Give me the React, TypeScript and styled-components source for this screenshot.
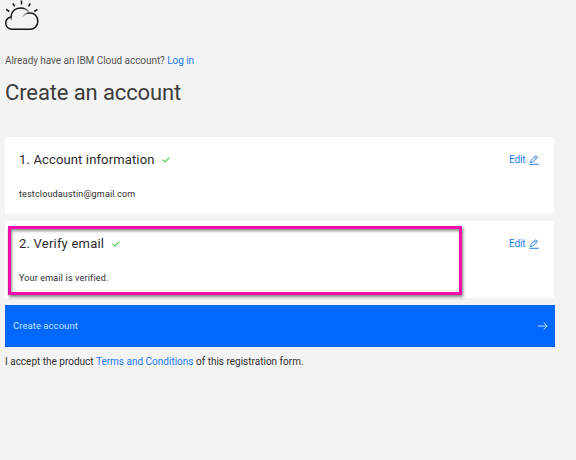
import React from "react";
import styled, { createGlobalStyle } from "styled-components";

const Global = createGlobalStyle`
  * { box-sizing: border-box; }
  body { margin: 0; background: #f3f3f3; font-family: Roboto, "Open Sans", sans-serif; color: #2b2b2b; }
`;
const Page = styled.main`
  width: 576px;
  height: 460px;
  padding: 0 21px 0 5px;
  display: flex;
  flex-direction: column;
  overflow: hidden;
  background: #f3f3f3;
`;
const Logo = styled.svg`
  display: block;
  width: 36px;
  height: 32px;
  flex: none;
`;
const Line = styled.p<{ $top: number; $color: string; $spacing: number }>`
  margin: ${(p) => p.$top}px 0 0;
  font-size: 10px;
  line-height: 14px;
  white-space: nowrap;
  color: ${(p) => p.$color};
  letter-spacing: ${(p) => p.$spacing}px;
`;
const Link = styled.a`
  color: #1a7af8;
  text-decoration: none;
`;
const Heading = styled.h1`
  margin: 8px 0 0;
  font-size: 22px;
  font-weight: 400;
  line-height: 33px;
  letter-spacing: -0.12px;
  color: #3c3c3c;
`;
const Cards = styled.div`
  display: flex;
  flex-direction: column;
  gap: 7px;
  margin-top: 28px;
`;
const Card = styled.section`
  position: relative;
  height: 77px;
  margin-right: 1px;
  padding: 14px 15px 0 14px;
  background: #fff;
`;
const CardHeader = styled.div`
  display: flex;
  align-items: center;
  height: 18px;
`;
const Title = styled.h2<{ $spacing: number }>`
  margin: 0;
  font-size: 13px;
  font-weight: 400;
  line-height: 18px;
  letter-spacing: ${(p) => p.$spacing}px;
`;
const Check = styled.svg`
  width: 8px;
  height: 6px;
  margin-left: 7.5px;
`;
const Edit = styled.a`
  display: flex;
  align-items: center;
  gap: 3.5px;
  margin-left: auto;
  font-size: 10px;
  line-height: 14px;
  letter-spacing: -0.1px;
  color: #1a7af8;
`;
const Detail = styled.p<{ $spacing: number }>`
  margin: 18px 0 0;
  font-size: 9px;
  line-height: 14px;
  letter-spacing: ${(p) => p.$spacing}px;
`;
const Highlight = styled.div`
  position: absolute;
  left: 3px;
  top: 5px;
  width: 454px;
  height: 69px;
  border: 3px solid #f00ca8;
  box-shadow: 1px 2px 3px rgba(0, 0, 0, 0.5), inset 1px 2px 3px rgba(0, 0, 0, 0.45);
`;
const Submit = styled.button`
  display: flex;
  align-items: center;
  justify-content: space-between;
  height: 42px;
  margin: 7px 0 0;
  padding: 0 7px 0 8px;
  border: 0;
  background: #0068ff;
  color: #c5e0ff;
  font: 9.5px/14px Roboto, sans-serif;
  letter-spacing: 0.05px;
`;

const EditLink = () => (
  <Edit>
    Edit
    <svg width="10" height="10" viewBox="0 0 10 10" fill="none" stroke="currentColor" strokeWidth="0.95">
      <path d="M.3 9.3h9.4M1.5 7.6l.5-2.2L6.7.7l1.7 1.7-4.7 4.7zM5.5 1.9l1.7 1.7" />
    </svg>
  </Edit>
);
const CheckIcon = () => (
  <Check viewBox="0 0 8 6" fill="none" stroke="#42cd50" strokeWidth="1.05">
    <path d="M.6 2.6 3 5 7.5.6" />
  </Check>
);

export default function App() {
  return (
    <>
      <Global />
      <Page>
        <Logo viewBox="0 0 36 32" fill="none" stroke="#151515" strokeWidth="1.5">
          <defs>
            <linearGradient id="puff" gradientUnits="userSpaceOnUse" x1="17" y1="16" x2="25" y2="13">
              <stop offset="0" stopColor="#151515" stopOpacity="0.05" />
              <stop offset="1" stopColor="#151515" />
            </linearGradient>
            <linearGradient id="tail" gradientUnits="userSpaceOnUse" x1="6" y1="16.5" x2="7" y2="21">
              <stop offset="0" stopColor="#151515" />
              <stop offset="1" stopColor="#151515" stopOpacity="0" />
            </linearGradient>
            <linearGradient id="dome" gradientUnits="userSpaceOnUse" x1="18" y1="8" x2="25" y2="12.5">
              <stop offset="0" stopColor="#151515" />
              <stop offset="1" stopColor="#151515" stopOpacity="0.2" />
            </linearGradient>
          </defs>
          <path d="M16.5.6v4M7.8 3.5l1.9 2.8M25.4 3.5l-1.9 2.8M1.1 9.4l3.2 2.1M29.2 11.5l3.2-2.1" />
          <path d="M6 17C2.8 17.7.8 20.1.8 23.1.8 26.8 3.5 29.3 7 29.3h18.1c4.3 0 7.7-3.5 7.7-8.1 0-4.9-3.2-8.2-7.8-8.2" />
          <path d="M6 17.3C6 11.8 9.9 7.9 15.4 7.9c3.8 0 6.9 1.6 8.9 4.7" stroke="url(#dome)" />
          <path d="M6 17q0 2.3 1 4.2" stroke="url(#tail)" />
          <path d="M17.3 17.2C18.8 14.4 21.5 13 25 13" stroke="url(#puff)" />
        </Logo>
        <Line $top={22} $color="#555" $spacing={-0.06}>
          Already have an IBM Cloud account? <Link>Log in</Link>
        </Line>
        <Heading>Create an account</Heading>
        <Cards>
          <Card>
            <CardHeader>
              <Title $spacing={0.14}>1. Account information</Title>
              <CheckIcon />
              <EditLink />
            </CardHeader>
            <Detail $spacing={0.16}>testcloudaustin@gmail.com</Detail>
          </Card>
          <Card>
            <CardHeader>
              <Title $spacing={0.21}>2. Verify email</Title>
              <CheckIcon />
              <EditLink />
            </CardHeader>
            <Detail $spacing={0.17}>Your email is verified.</Detail>
            <Highlight />
          </Card>
        </Cards>
        <Submit>
          Create account
          <svg width="10" height="8" viewBox="0 0 10 8" fill="none" stroke="currentColor" strokeWidth="1">
            <path d="M0 4h9M5.7.6 9.2 4 5.7 7.4" />
          </svg>
        </Submit>
        <Line $top={8} $color="#303030" $spacing={0}>
          I accept the product <Link>Terms and Conditions</Link> of this registration form.
        </Line>
      </Page>
    </>
  );
}
